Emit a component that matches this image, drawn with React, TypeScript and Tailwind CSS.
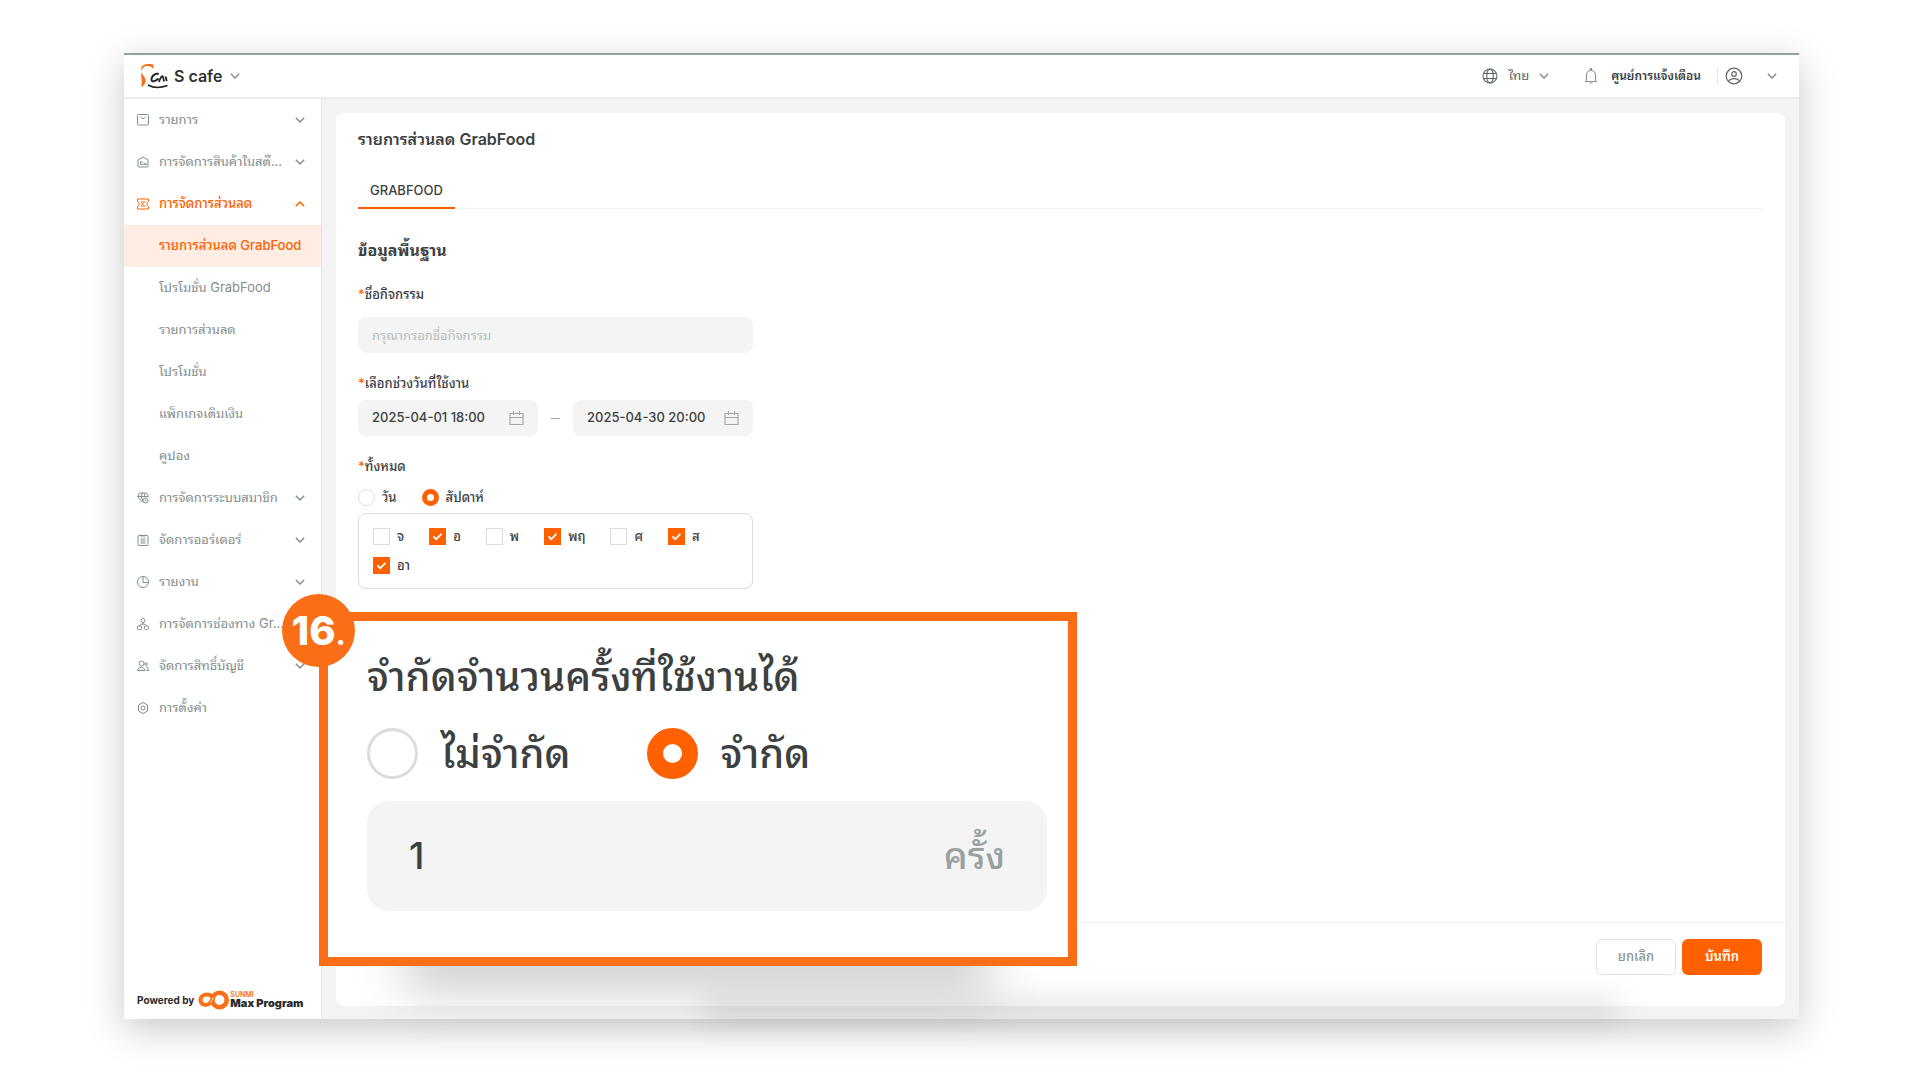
import React from 'react';

type IconProps = { className?: string };

const Svg: React.FC<IconProps & { children: React.ReactNode }> = ({ className = 'w-3 h-3', children }) => (
  <svg viewBox="0 0 24 24" fill="none" stroke="currentColor" strokeWidth="2" className={`shrink-0 ${className}`} aria-hidden="true">
    {children}
  </svg>
);

const BagIcon = () => (
  <Svg>
    <rect x="1" y="1" width="22" height="21" rx="2" />
    <path d="M7 6l5 4 5-4" />
  </Svg>
);

const StoreIcon = () => (
  <Svg>
    <path d="M2 8l10-6 10 6v12a2 2 0 0 1-2 2H4a2 2 0 0 1-2-2z" />
    <path d="M6 12h5M6 17h5M14 17h5M14 18v-5M7 12v6M18 14v4" />
  </Svg>
);

const TicketIcon = () => (
  <Svg>
    <path d="M1 2h22v5c-4 1-4 9 0 10v5H1v-5c4-1 4-9 0-10z" />
    <path d="M8 8h9M8 12h6M8 16h9" />
  </Svg>
);

const DiamondIcon = () => (
  <Svg>
    <path d="M11 21L1 9l4-7h14l4 7M1 9h22M8 9l4 10M8 9l3-7M16 9l-2-7" />
    <circle cx="17" cy="17" r="5" />
    <path d="M17 15v3h2" />
  </Svg>
);

const ClipboardIcon = () => (
  <Svg>
    <rect x="2" y="3" width="20" height="20" rx="2" />
    <path d="M7 1v3h10V1M7 10h10M7 14h10M7 18h10" />
  </Svg>
);

const PieIcon = () => (
  <Svg>
    <circle cx="12" cy="12" r="11" />
    <path d="M12 2v11h10" />
  </Svg>
);

const ChannelIcon = () => (
  <Svg>
    <circle cx="12" cy="5" r="4" />
    <path d="M12 9v3M5 16c0-5 14-5 14 0" />
    <rect x="1" y="16" width="8" height="7" rx="2" />
    <rect x="15" y="16" width="8" height="7" rx="2" />
  </Svg>
);

const UsersIcon = () => (
  <Svg>
    <circle cx="9" cy="7" r="5" />
    <path d="M1 21c0-8 15-8 15 0zM18 14c3 0 5 3 5 7h-4" />
    <circle cx="18" cy="8" r="2.5" />
  </Svg>
);

const GearIcon = () => (
  <Svg>
    <path d="M12 1l9 5v12l-9 5-9-5V6z" />
    <circle cx="12" cy="12" r="4" />
  </Svg>
);

const GlobeIcon = () => (
  <svg viewBox="0 0 16 16" fill="none" stroke="currentColor" strokeWidth="1.1" className="w-4 h-4" aria-hidden="true">
    <circle cx="8" cy="8" r="7" />
    <ellipse cx="8" cy="8" rx="3.3" ry="7" />
    <path d="M1.5 5.5h13M1.5 10.5h13" />
  </svg>
);

const BellIcon = () => (
  <svg viewBox="0 0 16 16" fill="none" stroke="currentColor" strokeWidth="1.2" className="w-4 h-4" aria-hidden="true">
    <path d="M2 13.5h12M3.5 13V7a4.5 4.5 0 0 1 9 0v6M7.5 2V.5h1V2M6.5 15h3" />
  </svg>
);

const UserIcon = () => (
  <svg viewBox="0 0 18 18" fill="none" stroke="currentColor" strokeWidth="1.2" className="w-[18px] h-[18px]" aria-hidden="true">
    <circle cx="9" cy="9" r="7.8" />
    <circle cx="9" cy="7" r="2.3" />
    <path d="M3.6 14.2c1.6-3.4 9.2-3.4 10.8 0" />
  </svg>
);

const CalendarIcon = () => (
  <svg viewBox="0 0 15 15" fill="none" stroke="#a3a9a9" strokeWidth="1.2" className="w-[15px] h-[15px] shrink-0" aria-hidden="true">
    <path d="M1 2.5h13v11H1zM1 6.5h13M4.5 0v4M10.5 0v4" />
  </svg>
);

const Chevron: React.FC<{ up?: boolean; className?: string }> = ({ up, className = 'text-[#869090]' }) => (
  <svg viewBox="0 0 10 6" fill="none" stroke="currentColor" strokeWidth="1.5" className={`w-[10px] h-[6px] shrink-0 ${className}`} aria-hidden="true">
    <path d={up ? 'M.8 5.2L5 1l4.2 4.2' : 'M.8.8L5 5 9.2.8'} />
  </svg>
);

const CafeLogo = () => (
  <svg viewBox="0 0 28 26" fill="none" className="w-7 h-[26px]" aria-hidden="true">
    <path d="M1.6 8C-.4 2.5 5 0 13 1.4c1 .8.8 3-.4 4.4-.4-2-2.6-3-5.6-2.8C4 3 2 5 1.6 8z" fill="#f96e16" />
    <path d="M1.2 9c1.4 3.5 4.6 5 4.3 9-.2 3-2 5-4.3 6.2C2.6 19 .8 14 1.2 9z" fill="#f96e16" />
    <path d="M18.5 11.5c-1-2-6.5 0-7 4.5-.3 3.800 4 2.500 7-.5" stroke="#222" strokeWidth="1.9" />
    <path d="M19 19c.8-2.500 2-5.500 3.500-5.800 1.200 0 .6 4 1.800 5.300M25.500 13.500l1.300 4.500" stroke="#222" strokeWidth="1.800" />
    <path d="M8 22c5 2.800 12 3.300 19.500.6" stroke="#222" strokeWidth="1.6" />
  </svg>
);

const MaxLogo = () => (
  <svg viewBox="0 0 32 20" fill="none" stroke="#f96e16" className="w-8 h-5 shrink-0" aria-hidden="true">
    <path d="M14 6C8 2.5 2.5 5.5 2.5 10c0 5 6.5 6.5 9.5 3l4-6" strokeWidth="4" />
    <circle cx="21.5" cy="10" r="7.2" strokeWidth="4.5" />
    <path d="M12.5 12.5l3-5" stroke="#fff" strokeWidth=".8" />
  </svg>
);

interface MenuItem {
  label: string;
  icon?: React.ReactNode;
  state?: 'open' | 'selected';
  leaf?: boolean;
}

const menu: MenuItem[] = [
  { label: 'รายการ', icon: <BagIcon /> },
  { label: 'การจัดการสินค้าในสต๊...', icon: <StoreIcon /> },
  { label: 'การจัดการส่วนลด', icon: <TicketIcon />, state: 'open' },
  { label: 'รายการส่วนลด GrabFood', state: 'selected', leaf: true },
  { label: 'โปรโมชั่น GrabFood', leaf: true },
  { label: 'รายการส่วนลด', leaf: true },
  { label: 'โปรโมชั่น', leaf: true },
  { label: 'แพ็กเกจเติมเงิน', leaf: true },
  { label: 'คูปอง', leaf: true },
  { label: 'การจัดการระบบสมาชิก', icon: <DiamondIcon /> },
  { label: 'จัดการออร์เดอร์', icon: <ClipboardIcon /> },
  { label: 'รายงาน', icon: <PieIcon /> },
  { label: 'การจัดการช่องทาง Gr...', icon: <ChannelIcon /> },
  { label: 'จัดการสิทธิ์บัญชี', icon: <UsersIcon /> },
  { label: 'การตั้งค่า', icon: <GearIcon />, leaf: true },
];

const days = [
  { label: 'จ', checked: false },
  { label: 'อ', checked: true },
  { label: 'พ', checked: false },
  { label: 'พฤ', checked: true },
  { label: 'ศ', checked: false },
  { label: 'ส', checked: true },
  { label: 'อา', checked: true },
];

const Sidebar = () => (
  <aside className="w-[198px] shrink-0 bg-white border-r border-[#e6e6e6] flex flex-col">
    <nav>
      {menu.map((item) => (
        <a
          key={item.label}
          href="#"
          className={`h-[42px] pl-[13px] pr-4 flex items-center text-[13px] whitespace-nowrap ${
            item.state === 'selected' ? 'bg-[#ffede3]' : ''
          } ${item.state ? 'text-[#ff6000] font-medium' : 'text-[#848e8e]'}`}
        >
          <span className="w-[22px] shrink-0">{item.icon}</span>
          <span className="flex-1 min-w-0">{item.label}</span>
          {!item.leaf && (
            <Chevron up={item.state === 'open'} className={item.state === 'open' ? 'text-[#ff6000]' : 'text-[#869090]'} />
          )}
        </a>
      ))}
    </nav>
    <div className="mt-auto h-9 pl-[13px] mb-px flex items-center text-[#2b2b2b] font-bold">
      <span className="text-[10px] mr-1">Powered by</span>
      <MaxLogo />
      <span className="flex flex-col text-[11px] leading-[10px] font-black">
        <span className="text-[7px] leading-[6px] font-semibold text-[#f96e16]">SUNMI</span>
        Max Program
      </span>
    </div>
  </aside>
);

const Radio: React.FC<{ name: string; label: string; checked?: boolean; big?: boolean }> = ({ name, label, checked, big }) => (
  <label className={`flex items-center ${big ? 'gap-[23px]' : 'gap-[7px]'}`}>
    <input
      type="radio"
      name={name}
      defaultChecked={checked}
      className={
        big
          ? 'appearance-none w-[51px] h-[51px] rounded-full bg-white border-3 border-[#dcdcdc] checked:border-[16px] checked:border-[#ff6000]'
          : 'appearance-none w-[17px] h-[17px] rounded-full bg-white border border-[#dcdcdc] checked:border-[5px] checked:border-[#ff6000]'
      }
    />
    {label}
  </label>
);

const DayBox: React.FC<{ label: string; checked: boolean }> = ({ label, checked }) => (
  <label className="flex items-center gap-[7px]">
    <span className="grid">
      <input
        type="checkbox"
        defaultChecked={checked}
        className="peer col-start-1 row-start-1 appearance-none w-[17px] h-[17px] bg-white border border-[#dcdcdc] checked:bg-[#ff6000] checked:border-[#ff6000]"
      />
      <svg viewBox="0 0 17 17" fill="none" stroke="#fff" strokeWidth="1.8" className="col-start-1 row-start-1 w-[17px] h-[17px] pointer-events-none invisible peer-checked:visible" aria-hidden="true">
        <path d="M4.5 8.5l2.7 2.7 5.3-5.4" />
      </svg>
    </span>
    {label}
  </label>
);

const Required: React.FC<{ htmlFor?: string; children: React.ReactNode }> = ({ htmlFor, children }) => (
  <label htmlFor={htmlFor} className="block h-5 leading-5">
    <span className="text-[#ff6000]">*</span>
    {children}
  </label>
);

const DateField: React.FC<{ id?: string; label: string; value: string }> = ({ id, label, value }) => (
  <div className="flex-1 min-w-0 h-9 px-[14px] rounded-lg bg-[#f4f4f4] flex items-center">
    <input id={id} aria-label={label} defaultValue={value} className="flex-1 min-w-0 bg-transparent outline-none" />
    <CalendarIcon />
  </div>
);

const LimitCallout = () => (
  <div className="absolute left-[195px] top-[557px] w-[758px] h-[354px]">
    <div className="absolute inset-x-24 bottom-0 h-10 shadow-[0_16px_48px_10px_rgba(60,70,70,0.26)]" />
    <section className="relative h-full border-9 border-[#fa6e17] bg-white pl-[39px] pr-[21px] pt-5 text-[40px] font-medium text-[#3c4040]">
      <h2 className="h-[72px] leading-[72px]">จำกัดจำนวนครั้งที่ใช้งานได้</h2>
      <div className="mt-[15px] h-[51px] flex items-center gap-[76px]">
        <Radio big name="limit" label="ไม่จำกัด" />
        <Radio big name="limit" label="จำกัด" checked />
      </div>
      <div className="mt-[22px] h-[110px] rounded-[22px] bg-[#f4f4f4] px-[42px] flex items-center text-[37px]">
        <input aria-label="จำกัดจำนวนครั้งที่ใช้งานได้" defaultValue="1" className="flex-1 min-w-0 bg-transparent outline-none" />
        <span className="text-[#98a1a1]">ครั้ง</span>
      </div>
    </section>
    <div className="absolute -left-[37px] -top-[18px] w-[73px] h-[73px] rounded-full bg-[#fa6e17] flex items-center justify-center text-white text-[40px] font-extrabold">
      <span>
        16<span className="text-[28px]">.</span>
      </span>
    </div>
  </div>
);

export default function App() {
  return (
    <div className="min-h-screen flex flex-col bg-white pt-[53px] pb-[61px] pl-[124px] pr-[121px] font-[Inter,'Noto_Sans_Thai_Looped',Loma,Waree,Garuda,'Noto_Sans_Thai',sans-serif] text-[13px] text-[#3c4040]">
      <div className="relative flex-1 flex flex-col border-t-2 border-[#93a0a0] shadow-[0_10px_36px_rgba(0,0,0,0.22)]">
        <header className="h-11 shrink-0 bg-white border-b-2 border-[#ececec] pl-4 pr-[22px] flex items-center">
          <CafeLogo />
          <button className="ml-[6px] flex items-center gap-2 text-base font-semibold text-[#2f3333]">
            S cafe
            <Chevron />
          </button>
          <div className="ml-auto flex items-center text-[#5c6666]">
            <button className="flex items-center">
              <GlobeIcon />
              <span className="ml-[10px] mr-[10px]">ไทย</span>
              <Chevron />
            </button>
            <button className="ml-[34px] flex items-center gap-3">
              <span className="text-[#8b9595]"><BellIcon /></span>
              <span className="text-xs font-semibold text-[#3c4040]">ศูนย์การแจ้งเตือน</span>
            </button>
            <span className="ml-4 mr-[7px] w-px h-4 bg-[#e6e6e6]" />
            <button className="flex items-center gap-6" aria-label="บัญชี">
              <UserIcon />
              <Chevron />
            </button>
          </div>
        </header>

        <div className="flex-1 flex bg-[#f3f3f3]">
          <Sidebar />
          <main className="flex-1 min-w-0 flex flex-col mt-[14px] mb-[13px] mx-[14px] rounded-lg bg-white">
            <div className="pl-[22px] pr-[23px]">
              <h1 className="pt-4 leading-5 text-base font-semibold">รายการส่วนลด GrabFood</h1>
              <div className="mt-[25px] flex border-b border-[#f2f2f2]">
                <button className="h-[35px] -mb-px px-3 border-b-2 border-[#ff6000] font-medium">GRABFOOD</button>
              </div>

              <form className="w-[395px] pt-[29px] font-medium">
                <h2 className="h-6 leading-6 text-base font-bold">ข้อมูลพื้นฐาน</h2>
                <div className="mt-[22px]">
                  <Required htmlFor="name">ชื่อกิจกรรม</Required>
                </div>
                <input
                  id="name"
                  placeholder="กรุณากรอกชื่อกิจกรรม"
                  className="mt-[13px] w-full h-9 px-[14px] rounded-lg bg-[#f4f4f4] font-normal placeholder:text-[#b5bcbc] outline-none"
                />
                <div className="mt-5">
                  <Required htmlFor="start">เลือกช่วงวันที่ใช้งาน</Required>
                </div>
                <div className="mt-[7px] flex items-center">
                  <DateField id="start" label="เริ่ม" value="2025-04-01 18:00" />
                  <span className="mx-[13px] w-[9px] h-px bg-[#a3a9a9]" />
                  <DateField label="สิ้นสุด" value="2025-04-30 20:00" />
                </div>
                <div className="mt-5">
                  <Required>ทั้งหมด</Required>
                </div>
                <div className="mt-[13px] h-[17px] flex items-center gap-[25px]">
                  <Radio name="period" label="วัน" />
                  <Radio name="period" label="สัปดาห์" checked />
                </div>
                <div className="mt-[7px] h-[76px] rounded-lg border border-[#dcdcdc] px-[14px] pt-[14px] flex flex-wrap content-start gap-x-[25px] gap-y-3 leading-[17px]">
                  {days.map((day) => (
                    <DayBox key={day.label} {...day} />
                  ))}
                </div>
              </form>
            </div>

            <footer className="mt-auto h-[84px] shrink-0 border-t border-[#f2f2f2] pt-4 pr-[23px] flex justify-end gap-[6px]">
              <button className="w-20 h-9 rounded-md border border-[#e2e2e2] bg-white text-[#8b9595] font-medium">ยกเลิก</button>
              <button className="w-20 h-9 rounded-md bg-[#ff6000] font-semibold text-white">บันทึก</button>
            </footer>
          </main>
        </div>

        {/* soft shade along the bottom edge */}
        <div className="absolute left-[580px] right-[180px] bottom-0 h-5 pointer-events-none">
          <div className="h-full bg-black/12 blur-[14px]" />
        </div>
        <LimitCallout />
      </div>
    </div>
  );
}
